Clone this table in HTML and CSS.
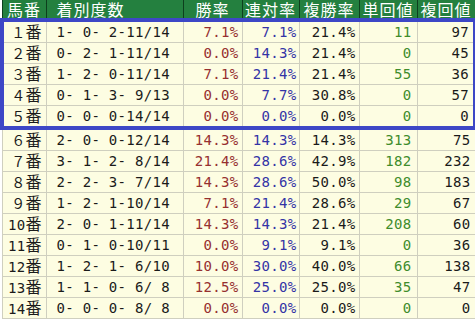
FILE: index.html
```
<!DOCTYPE html>
<html lang="ja">
<head>
<meta charset="utf-8">
<title>馬番別成績</title>
<link rel="stylesheet" href="styles.css">
</head>
<body>
<table class="stats">
  <colgroup>
    <col class="c-no"><col class="c-rec"><col class="c-pct"><col class="c-pct2"><col class="c-pct3"><col class="c-val"><col class="c-val2">
  </colgroup>
  <thead>
    <tr><th>馬番</th><th class="h-rec">着別度数</th><th>勝率</th><th>連対率</th><th>複勝率</th><th>単回値</th><th>複回値</th></tr>
  </thead>
  <tbody class="hl">
    <tr><td class="no">１<span class="ban">番</span></td><td class="rec">1- 0- 2-11/14</td><td class="win">7.1%</td><td class="ren">7.1%</td><td class="fuku">21.4%</td><td class="tan">11</td><td class="fv">97</td></tr>
    <tr><td class="no">２<span class="ban">番</span></td><td class="rec">0- 2- 1-11/14</td><td class="win">0.0%</td><td class="ren">14.3%</td><td class="fuku">21.4%</td><td class="tan">0</td><td class="fv">45</td></tr>
    <tr><td class="no">３<span class="ban">番</span></td><td class="rec">1- 2- 0-11/14</td><td class="win">7.1%</td><td class="ren">21.4%</td><td class="fuku">21.4%</td><td class="tan">55</td><td class="fv">36</td></tr>
    <tr><td class="no">４<span class="ban">番</span></td><td class="rec">0- 1- 3- 9/13</td><td class="win">0.0%</td><td class="ren">7.7%</td><td class="fuku">30.8%</td><td class="tan">0</td><td class="fv">57</td></tr>
    <tr><td class="no">５<span class="ban">番</span></td><td class="rec">0- 0- 0-14/14</td><td class="win">0.0%</td><td class="ren">0.0%</td><td class="fuku">0.0%</td><td class="tan">0</td><td class="fv">0</td></tr>
  </tbody>
  <tbody class="rest">
    <tr><td class="no">６<span class="ban">番</span></td><td class="rec">2- 0- 0-12/14</td><td class="win">14.3%</td><td class="ren">14.3%</td><td class="fuku">14.3%</td><td class="tan">313</td><td class="fv">75</td></tr>
    <tr><td class="no">７<span class="ban">番</span></td><td class="rec">3- 1- 2- 8/14</td><td class="win">21.4%</td><td class="ren">28.6%</td><td class="fuku">42.9%</td><td class="tan">182</td><td class="fv">232</td></tr>
    <tr><td class="no">８<span class="ban">番</span></td><td class="rec">2- 2- 3- 7/14</td><td class="win">14.3%</td><td class="ren">28.6%</td><td class="fuku">50.0%</td><td class="tan">98</td><td class="fv">183</td></tr>
    <tr><td class="no">９<span class="ban">番</span></td><td class="rec">1- 2- 1-10/14</td><td class="win">7.1%</td><td class="ren">21.4%</td><td class="fuku">28.6%</td><td class="tan">29</td><td class="fv">67</td></tr>
    <tr><td class="no">10<span class="ban">番</span></td><td class="rec">2- 0- 1-11/14</td><td class="win">14.3%</td><td class="ren">14.3%</td><td class="fuku">21.4%</td><td class="tan">208</td><td class="fv">60</td></tr>
    <tr><td class="no">11<span class="ban">番</span></td><td class="rec">0- 1- 0-10/11</td><td class="win">0.0%</td><td class="ren">9.1%</td><td class="fuku">9.1%</td><td class="tan">0</td><td class="fv">36</td></tr>
    <tr><td class="no">12<span class="ban">番</span></td><td class="rec">1- 2- 1- 6/10</td><td class="win">10.0%</td><td class="ren">30.0%</td><td class="fuku">40.0%</td><td class="tan">66</td><td class="fv">138</td></tr>
    <tr><td class="no">13<span class="ban">番</span></td><td class="rec">1- 1- 0- 6/ 8</td><td class="win">12.5%</td><td class="ren">25.0%</td><td class="fuku">25.0%</td><td class="tan">35</td><td class="fv">47</td></tr>
    <tr><td class="no">14<span class="ban">番</span></td><td class="rec">0- 0- 0- 8/ 8</td><td class="win">0.0%</td><td class="ren">0.0%</td><td class="fuku">0.0%</td><td class="tan">0</td><td class="fv">0</td></tr>
  </tbody>
</table>
</body>
</html>
```
FILE: styles.css
```
html, body {
  margin: 0;
  padding: 0;
  background: #ffffff;
}

.stats {
  border-collapse: collapse;
  table-layout: fixed;
  width: 473px;
  font-family: "DejaVu Sans Mono", "Noto Sans CJK JP", monospace;
  font-size: 14px;
  letter-spacing: 0.3px;
}

.c-no { width: 44px; }
.c-rec { width: 137px; }
.c-pct { width: 59px; }
.c-pct2 { width: 57px; }
.c-pct3 { width: 60px; }
.c-val { width: 58px; }
.c-val2 { width: 58px; }

.stats th {
  box-sizing: border-box;
  height: 20px;
  padding: 0;
  background: #24803f;
  color: #ffffff;
  font-family: "Noto Sans CJK JP", sans-serif;
  font-weight: normal;
  font-size: 16px;
  line-height: 18px;
  letter-spacing: 1px;
  text-align: center;
  vertical-align: top;
  border-left: 1px solid #0d3f1d;
  border-right: 1px solid #0d3f1d;
  border-top: 0;
  white-space: nowrap;
}

.stats th.h-rec {
  text-align: left;
  padding-left: 10px;
}

.stats td {
  box-sizing: border-box;
  height: 21px;
  padding: 0 3px 0 0;
  background: #fdfde2;
  color: #1a1a1a;
  border: 1px solid #cfcfbf;
  line-height: 18px;
  text-align: right;
  vertical-align: middle;
  white-space: pre;
  overflow: hidden;
}

.stats tbody.hl tr:first-child td,
.stats tbody.hl tr:last-child td,
.stats tbody.rest tr:first-child td {
  height: 22px;
}

.stats tbody.hl {
  border: 4px solid #3d47c6;
}

.stats td.no {
  padding-right: 4px;
}

.ban {
  font-family: "Noto Sans CJK JP", sans-serif;
  font-size: 16px;
  line-height: 18px;
  letter-spacing: 0;
}

.stats td.rec {
  text-align: left;
  padding-left: 10px;
}

.stats td.win { color: #963030; }
.stats td.ren { color: #3434a6; padding-right: 2px; }
.stats td.fuku { color: #1a1a1a; padding-right: 3px; }
.stats td.tan { color: #3f8c2c; padding-right: 5px; }
.stats td.fv { color: #1a1a1a; padding-right: 4px; }
```
